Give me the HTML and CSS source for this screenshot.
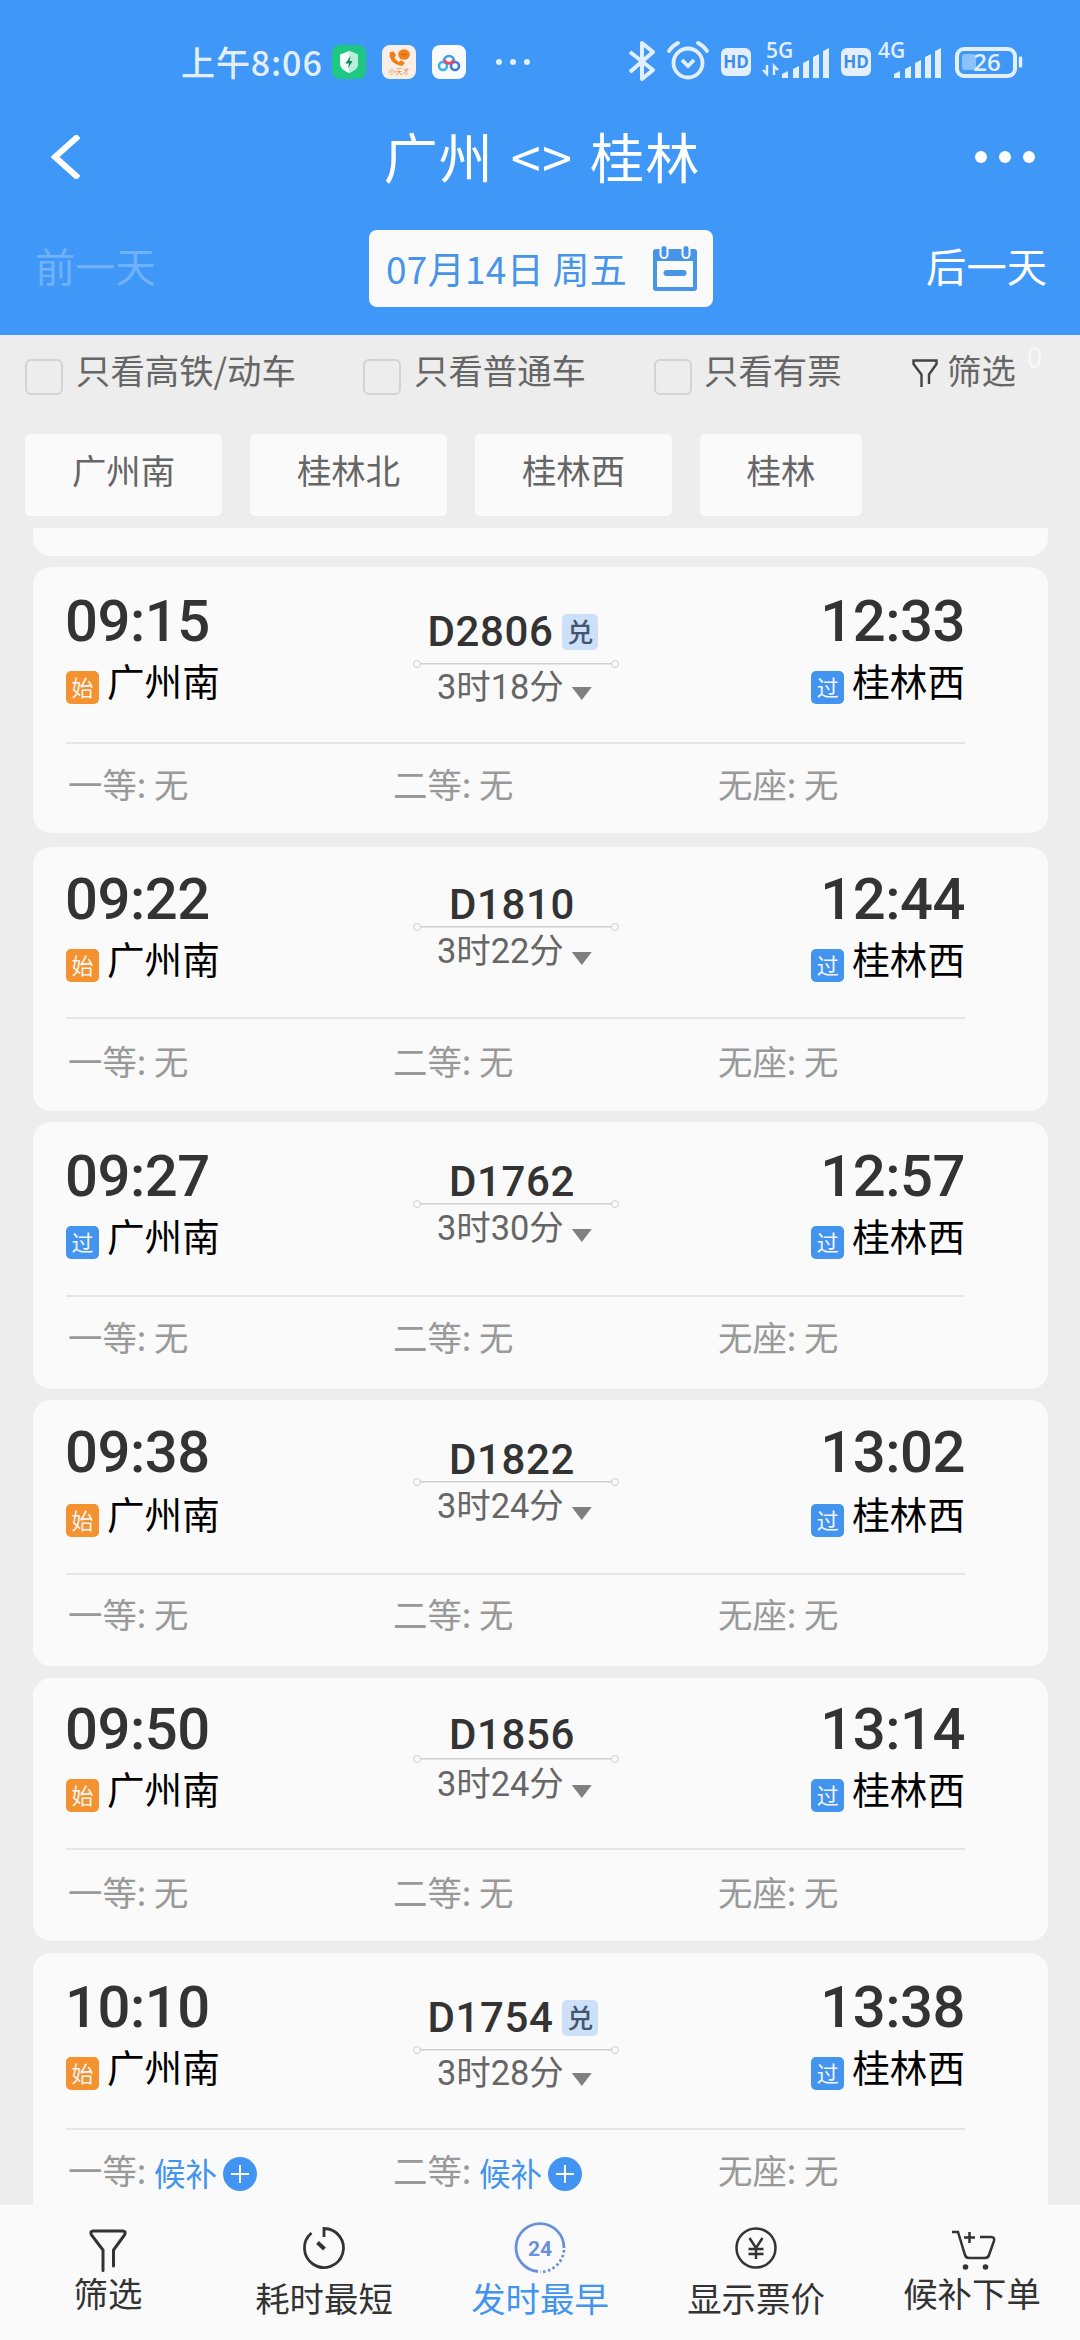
FILE: index.html
```html
<!DOCTYPE html>
<html lang="zh-CN">
<head>
    <meta charset="UTF-8">
    <meta name="viewport" content="width=device-width, initial-scale=1.0">
    <title>广州 - 桂林</title>
    <link rel="stylesheet" href="styles.css">
</head>
<body>
    <header>
        <div class="status">
            <span class="clock">上午8:06</span>
            <svg class="app" viewBox="0 0 34 34">
                <rect width="34" height="34" rx="8" fill="#1ec883"/>
                <path d="M17 6l9 3.500v9c0 4.500-4 7.500-9 9.500-5-2-9-5-9-9.500v-9z" fill="#f2fffa"/>
                <path d="M17 6l9 3.500v9c0 4.500-4 7.500-9 9.500z" fill="#b8efd9"/>
                <path d="M18.500 11l-5 7.500h3.500l-1 5 4.500-7.500h-3z" fill="#12885a"/>
            </svg>
            <svg class="app" viewBox="0 0 34 34">
                <rect width="34" height="34" rx="8" fill="#f7efe8"/>
                <path d="M8 7c-2 6 3 13 12 14l3-3-4-3-2 2c-2-1-4-3-4.500-4.500l1.500-2-2-4z" fill="#f0801c"/>
                <ellipse cx="22" cy="9.500" rx="5.800" ry="5.200" fill="#f0801c"/>
                <path d="M19 9.500h6" stroke="#c9650e" stroke-width="1"/>
                <text x="17" y="29" text-anchor="middle" class="app-text">小天才</text>
            </svg>
            <svg class="app" viewBox="0 0 34 34">
                <rect width="34" height="34" rx="8" fill="#fafbfe"/>
                <g fill="none" stroke-width="2.600">
                    <circle cx="11" cy="21" r="4" stroke="#35b5ea"/>
                    <circle cx="23" cy="21" r="4" stroke="#3a7bdc"/>
                    <path d="M12 16a5 5 0 1 1 10 0" stroke="#3aa0e8"/>
                    <path d="M12.500 15a4.700 4.700 0 0 0 9 0" stroke="#e9486a"/>
                </g>
            </svg>
            <span class="mini-dots"><i></i><i></i><i></i></span>
            <svg class="sys" viewBox="0 0 400 44" fill="none" stroke="#e3effe">
                <path d="M2 12L25 30L14 39V3L25 12L2 32" stroke-width="4" stroke-linejoin="round"/>
                <circle cx="60" cy="23" r="14.500" stroke-width="3.800"/>
                <path d="M54 20l6 6 6-6" stroke-width="3.800"/>
                <path d="M41 11q3-5 9-8M79 11q-3-5-9-8" stroke-width="3.800" stroke-linecap="round"/>
                <rect x="93" y="8" width="30" height="28" rx="6" fill="#e3effe" stroke="none"/>
                <text x="108" y="28" text-anchor="middle" class="hd">HD</text>
                <text x="138" y="18" class="net">5G</text>
                <path d="M139 25v9l-4-4M146 35v-9l4 4" stroke-width="2.400"/>
                <path d="M154 38v-4l6-3v7zM165 38v-9l6-3v12zM175 38v-15l6-3v18zM185 38v-21l6-3v24zM195 38v-27l6-3v30z" fill="#e3effe" stroke="none"/>
                <rect x="213" y="8" width="30" height="28" rx="6" fill="#e3effe" stroke="none"/>
                <text x="228" y="28" text-anchor="middle" class="hd">HD</text>
                <text x="250" y="18" class="net">4G</text>
                <path d="M266 38v-4l6-3v7zM277 38v-9l6-3v12zM287 38v-15l6-3v18zM297 38v-21l6-3v24zM307 38v-27l6-3v30z" fill="#e3effe" stroke="none"/>
                <rect x="329" y="9" width="58" height="27" rx="7" stroke-width="4"/>
                <rect x="334" y="14" width="14" height="16" rx="3" fill="#8cc2fc" stroke="none"/>
                <text x="359" y="31" text-anchor="middle" class="bat">26</text>
                <path d="M392.500 18v8" stroke-width="3.500" stroke-linecap="round"/>
            </svg>
        </div>
        <div class="title-bar">
            <svg class="back" viewBox="0 0 30 44"><path d="M27.500 1L4 22l23.500 21" fill="none" stroke="#fff" stroke-width="6"/></svg>
            <h1>广州 &lt;&gt; 桂林</h1>
            <span class="menu-dots"><i></i><i></i><i></i></span>
        </div>
        <div class="day-bar">
            <span class="day day-off">前一天</span>
            <div class="date">
                <span>07月14日 周五</span>
                <svg class="calendar" viewBox="0 0 44 45">
                    <rect y="3" width="44" height="42" rx="3" fill="#4795e9"/>
                    <rect x="4" y="15" width="36" height="26" fill="#fafafa"/>
                    <rect x="7.500" y="-1" width="7" height="13" rx="3.500" fill="#4795e9" stroke="#fafafa" stroke-width="2"/>
                    <rect x="29.500" y="-1" width="7" height="13" rx="3.500" fill="#4795e9" stroke="#fafafa" stroke-width="2"/>
                    <rect x="10.500" y="24" width="23" height="6" rx="3" fill="#4795e9"/>
                </svg>
            </div>
            <span class="day">后一天</span>
        </div>
    </header>

    <div class="filters">
        <label class="check check1"><i></i>只看高铁/动车</label>
        <label class="check check2"><i></i>只看普通车</label>
        <label class="check check3"><i></i>只看有票</label>
        <div class="filter-btn">
            <svg viewBox="0 0 26 29"><path d="M9.500 28V15.500L1.500 5V1.500h23V5l-7.500 10.500V25" fill="none" stroke="#444" stroke-width="2.400"/></svg>
            筛选<sup>0</sup>
        </div>
    </div>
    <div class="stations">
        <span>广州南</span>
        <span>桂林北</span>
        <span>桂林西</span>
        <span class="short">桂林</span>
    </div>

    <div class="list">
        <div class="card-end"></div>

        <div class="card card1">
            <div class="trip">
                <div class="from">
                    <div class="time">09:15</div>
                    <div class="station"><i class="tag start">始</i>广州南</div>
                </div>
                <div class="train">
                    <div class="num">D2806<i class="points">兑</i></div>
                    <div class="line"></div>
                    <div class="duration">3时18分<i></i></div>
                </div>
                <div class="to">
                    <div class="time">12:33</div>
                    <div class="station"><i class="tag">过</i>桂林西</div>
                </div>
            </div>
            <div class="seats"><span>一等: 无</span><span>二等: 无</span><span>无座: 无</span></div>
        </div>

        <div class="card card2">
            <div class="trip">
                <div class="from">
                    <div class="time">09:22</div>
                    <div class="station"><i class="tag start">始</i>广州南</div>
                </div>
                <div class="train">
                    <div class="num">D1810</div>
                    <div class="line"></div>
                    <div class="duration">3时22分<i></i></div>
                </div>
                <div class="to">
                    <div class="time">12:44</div>
                    <div class="station"><i class="tag">过</i>桂林西</div>
                </div>
            </div>
            <div class="seats"><span>一等: 无</span><span>二等: 无</span><span>无座: 无</span></div>
        </div>

        <div class="card card3">
            <div class="trip">
                <div class="from">
                    <div class="time">09:27</div>
                    <div class="station"><i class="tag">过</i>广州南</div>
                </div>
                <div class="train">
                    <div class="num">D1762</div>
                    <div class="line"></div>
                    <div class="duration">3时30分<i></i></div>
                </div>
                <div class="to">
                    <div class="time">12:57</div>
                    <div class="station"><i class="tag">过</i>桂林西</div>
                </div>
            </div>
            <div class="seats"><span>一等: 无</span><span>二等: 无</span><span>无座: 无</span></div>
        </div>

        <div class="card card4">
            <div class="trip">
                <div class="from">
                    <div class="time">09:38</div>
                    <div class="station"><i class="tag start">始</i>广州南</div>
                </div>
                <div class="train">
                    <div class="num">D1822</div>
                    <div class="line"></div>
                    <div class="duration">3时24分<i></i></div>
                </div>
                <div class="to">
                    <div class="time">13:02</div>
                    <div class="station"><i class="tag">过</i>桂林西</div>
                </div>
            </div>
            <div class="seats"><span>一等: 无</span><span>二等: 无</span><span>无座: 无</span></div>
        </div>

        <div class="card card5">
            <div class="trip">
                <div class="from">
                    <div class="time">09:50</div>
                    <div class="station"><i class="tag start">始</i>广州南</div>
                </div>
                <div class="train">
                    <div class="num">D1856</div>
                    <div class="line"></div>
                    <div class="duration">3时24分<i></i></div>
                </div>
                <div class="to">
                    <div class="time">13:14</div>
                    <div class="station"><i class="tag">过</i>桂林西</div>
                </div>
            </div>
            <div class="seats"><span>一等: 无</span><span>二等: 无</span><span>无座: 无</span></div>
        </div>

        <div class="card card6">
            <div class="trip">
                <div class="from">
                    <div class="time">10:10</div>
                    <div class="station"><i class="tag start">始</i>广州南</div>
                </div>
                <div class="train">
                    <div class="num">D1754<i class="points">兑</i></div>
                    <div class="line"></div>
                    <div class="duration">3时28分<i></i></div>
                </div>
                <div class="to">
                    <div class="time">13:38</div>
                    <div class="station"><i class="tag">过</i>桂林西</div>
                </div>
            </div>
            <div class="seats">
                <span>一等: <b>候补</b><i class="plus"></i></span>
                <span>二等: <b>候补</b><i class="plus"></i></span>
                <span>无座: 无</span>
            </div>
        </div>
    </div>

    <nav>
        <div class="tab high">
            <svg viewBox="0 0 50 52" fill="none" stroke="#333" stroke-width="3"><path d="M20 48.500V28L8.500 13q-2-4 2-4h29q4 0 2 4L30.500 28v16" stroke-linecap="round"/></svg>
            筛选
        </div>
        <div class="tab">
            <svg viewBox="0 0 50 52" fill="none" stroke="#333" stroke-width="2.800"><path d="M25 15V6.500a19.500 19.500 0 1 1-12.500 4.500"/><path d="M18.500 20.500l7 6.500" stroke-width="4"/></svg>
            耗时最短
        </div>
        <div class="tab active">
            <svg viewBox="0 0 50 52" fill="none" stroke="#6a90dd" stroke-width="2.800">
                <path d="M23 49.500A24 24 0 1 1 49 26"/>
                <path d="M49 28A24 24 0 0 1 25 50" stroke-dasharray="2.500 2.500"/>
                <text x="25" y="34" text-anchor="middle" class="t24">24</text>
            </svg>
            发时最早
        </div>
        <div class="tab">
            <svg viewBox="0 0 50 52" fill="none" stroke="#333" stroke-width="2.500"><circle cx="25" cy="26" r="19.500"/><path d="M18.500 16l6.500 10 6.500-10M25 26v11M17.500 27h15M17.500 32h15"/></svg>
            显示票价
        </div>
        <div class="tab high">
            <svg viewBox="0 0 50 52" fill="none" stroke="#333" stroke-width="2.500">
                <path d="M5 10h6l7 23q1 3 4 3h16q3 0 4-3l5-14q1-4-3-4H33"/>
                <path d="M22.500 10v11M17 15.500h11"/>
                <circle cx="18.500" cy="45" r="2.800" fill="#333" stroke="none"/>
                <circle cx="38.500" cy="45" r="2.800" fill="#333" stroke="none"/>
            </svg>
            候补下单
        </div>
    </nav>
</body>
</html>
```

FILE: styles.css
```css
:root{
    --blue: #3f97f8;
    --white: #fafafa;
    --gray: #ededed;
}
*{
    box-sizing: border-box;
}
html, body{
    margin: 0;
    padding: 0;
    width: 100%;
    height: 2340px;
    overflow: hidden;
}
body{
    display: flex;
    flex-direction: column;
    background-color: var(--gray);
    font-family: "Noto Sans CJK SC", sans-serif;
    color: #666;
    font-size: 34.4px;
    white-space: nowrap;
}
i{
    font-style: normal;
}

/* header */
header{
    height: 335px;
    flex: none;
    background-color: var(--blue);
    color: white;
}
.status{
    display: flex;
    align-items: center;
    height: 124px;
    padding-left: 181px;
}
.clock{
    width: 151px;
    color: #e3effe;
    font-size: 34px;
    font-weight: 500;
    letter-spacing: 0.9px;
    line-height: 34px;
}
.app{
    width: 34px;
    height: 34px;
    margin-right: 16px;
}
.app-text{
    font-size: 7px;
    fill: #e88a3c;
}
.mini-dots{
    display: flex;
    gap: 8px;
    margin-left: 14px;
    width: 132px;
}
.mini-dots i{
    width: 6px;
    height: 6px;
    border-radius: 50%;
    background-color: #e3effe;
}
.sys{
    width: 400px;
    height: 44px;
    overflow: visible;
}
.sys text{
    stroke: none;
    fill: #e3effe;
    font-family: "Open Sans", sans-serif;
}
.sys .hd{
    font-size: 17px;
    font-weight: 700;
    fill: #3d8eea;
}
.net{
    font-size: 21px;
    font-weight: 600;
}
.bat{
    font-size: 24px;
    font-weight: 600;
}
.title-bar{
    display: flex;
    align-items: center;
    justify-content: space-between;
    height: 65px;
    padding: 0 45px 0 51px;
}
.back{
    width: 30px;
    height: 44px;
}
h1{
    margin: 0 0 2px 28px;
    font-size: 54px;
    line-height: 60px;
    font-weight: 400;
    letter-spacing: 1.2px;
    word-spacing: 3.5px;
}
.menu-dots{
    display: flex;
    gap: 12px;
}
.menu-dots i{
    width: 12px;
    height: 12px;
    border-radius: 50%;
    background-color: white;
}
.day-bar{
    display: flex;
    justify-content: space-between;
    align-items: center;
    margin-top: 41px;
    height: 77px;
    padding: 0 33px 0 35px;
}
.day{
    font-size: 40.3px;
    line-height: 40px;
    padding-bottom: 7px;
}
.day-off{
    color: #6fb1fa;
}
.date{
    display: flex;
    justify-content: space-between;
    align-items: center;
    width: 344px;
    height: 77px;
    padding: 0 16px 0 17px;
    border-radius: 8px;
    background-color: var(--white);
    color: #4795e9;
    font-size: 37px;
    letter-spacing: 0.3px;
    line-height: 40px;
}
.date span{
    padding-bottom: 2px;
}
.calendar{
    width: 44px;
    height: 45px;
}

/* filters */
.filters{
    display: flex;
    height: 99px;
    flex: none;
    padding: 16px 0 0 25px;
    line-height: 36px;
}
.check{
    display: flex;
}
.check i{
    width: 38px;
    height: 36px;
    margin: 8px 13px 0 0;
    border: 2.5px solid #d3d3d3;
    border-radius: 6px;
}
.check1{
    width: 338px;
}
.check2{
    width: 291px;
}
.check3{
    width: 258px;
}
.check3 i{
    margin-right: 12px;
}
.filter-btn{
    display: flex;
}
.filter-btn svg{
    width: 26px;
    height: 29px;
    margin: 8px 9px 0 0;
}
.filter-btn sup{
    margin-left: 11px;
    color: #f8f8f8;
    font-size: 28px;
    line-height: 10px;
}
.stations{
    display: flex;
    gap: 28px;
    height: 94px;
    flex: none;
    padding-left: 25px;
}
.stations span{
    width: 197px;
    height: 82px;
    border-radius: 5px;
    background-color: var(--white);
    text-align: center;
    line-height: 70px;
}
.stations .short{
    width: 162px;
}

/* trains */
.list{
    height: 1677px;
    flex: none;
    overflow: hidden;
    padding: 0 32px 0 33px;
}
.card-end{
    height: 28px;
    margin-bottom: 11px;
    border-radius: 0 0 18px 18px;
    background-color: var(--white);
}
.card{
    --pad: 25px;
    --num: 38px;
    height: 266px;
    margin-bottom: 12px;
    padding: 0 83px 0 33px;
    border-radius: 18px;
    background-color: var(--white);
}
.trip{
    display: flex;
    height: 177px;
    border-bottom: 2px solid #e6e6e6;
}
.from, .to{
    width: 200px;
    padding-top: var(--pad);
}
.time{
    margin-left: -1px;
    color: #333;
    font-family: Roboto, sans-serif;
    font-size: 58px;
    font-weight: 500;
    letter-spacing: -0.5px;
    line-height: 58px;
}
.to{
    margin-left: auto;
    text-align: right;
}
.station{
    display: flex;
    margin-top: 11px;
    color: black;
    font-size: 37.6px;
    line-height: 38px;
}
.to .station{
    justify-content: flex-end;
    margin-right: 0;
}
.tag{
    width: 33px;
    height: 33px;
    margin: 10px 8px 0 0;
    border-radius: 5px;
    background-color: #4294ee;
    color: #f4f4f4;
    font-size: 22px;
    line-height: 31px;
    text-align: center;
}
.start{
    background-color: #f3922e;
}
.train{
    width: 206px;
    margin-left: 147px;
    padding-top: var(--num);
}
.num{
    display: flex;
    justify-content: center;
    height: 42px;
    padding-right: 8px;
    color: #333;
    font-family: Roboto, sans-serif;
    font-size: 42px;
    font-weight: 500;
    letter-spacing: 0.6px;
    line-height: 46px;
}
.points{
    width: 36px;
    height: 36px;
    margin: 5px 0 0 9px;
    border-radius: 5px;
    background-color: #cce0fa;
    color: #44566e;
    font: 500 26px/33px "Noto Sans CJK SC", sans-serif;
    text-align: center;
}
.line{
    display: flex;
    justify-content: space-between;
    align-items: center;
    height: 5px;
    background: linear-gradient(#d0d0d0, #d0d0d0) center / 192px 1.5px no-repeat;
}
.line::before, .line::after{
    content: "";
    width: 6px;
    height: 6px;
    border: 1.5px solid #cfcfcf;
    border-radius: 50%;
}
.duration{
    display: flex;
    margin-top: 4px;
    padding-left: 24px;
    color: #666;
    font-family: Roboto, "Noto Sans CJK SC", sans-serif;
    line-height: 36px;
}
.duration i{
    width: 20px;
    height: 13px;
    margin: 19px 0 0 8px;
    background-color: #808080;
    clip-path: polygon(0 0, 100% 0, 50% 100%);
}
.seats{
    display: grid;
    grid-template-columns: 325px 325px 1fr;
    margin-top: 21px;
    padding-left: 2px;
    color: #999;
    line-height: 36px;
}
.seats span{
    display: flex;
    white-space: pre;
}
.seats b{
    color: #4294ee;
    font-size: 31.5px;
    font-weight: 400;
    line-height: 42px;
}
.plus{
    width: 34px;
    height: 34px;
    margin: 6px 0 0 6px;
    border-radius: 50%;
    background: linear-gradient(white, white) center / 18px 2px no-repeat,
                linear-gradient(white, white) center / 2px 18px no-repeat,
                #4294f2;
}

/* cards differ a bit: with and without the points tag */
.card1, .card6{
    --num: 42px;
}
.card1 .num, .card6 .num{
    height: 52px;
    padding-right: 6px;
}
.card1 .duration, .card6 .duration{
    margin-top: 3px;
}
.card1 .duration i, .card6 .duration i{
    margin-top: 18px;
}
.card1{
    margin-bottom: 14px;
}
.card2{
    --pad: 23px;
    --num: 35px;
    height: 264px;
    margin-bottom: 11px;
}
.card2 .trip, .card5 .trip{
    height: 172px;
}
.card2 .seats, .card5 .seats{
    margin-top: 23px;
}
.card3{
    --num: 37px;
    height: 267px;
    margin-bottom: 11px;
}
.card3 .trip, .card4 .trip{
    height: 175px;
}
.card4{
    --pad: 23px;
    --num: 37px;
}
.card4 .station{
    margin-top: 13px;
}
.card4 .seats{
    margin-top: 20px;
}
.card5{
    --pad: 22px;
    --num: 34px;
    height: 263px;
}
.card5 .num{
    height: 44px;
}
.card5 .duration{
    margin-top: 5px;
}

/* bottom bar */
nav{
    display: flex;
    height: 135px;
    flex: none;
    background-color: var(--white);
    color: #333;
}
.tab{
    display: flex;
    flex-direction: column;
    align-items: center;
    width: 20%;
    padding-top: 17px;
    line-height: 36px;
}
.tab svg{
    width: 50px;
    height: 52px;
    margin-bottom: 5px;
    overflow: visible;
}
.high svg{
    margin-bottom: 0;
}
.active{
    color: #4294ee;
}
.t24{
    font: 700 21px Roboto, sans-serif;
    fill: #6a90dd;
    stroke: none;
}
```
